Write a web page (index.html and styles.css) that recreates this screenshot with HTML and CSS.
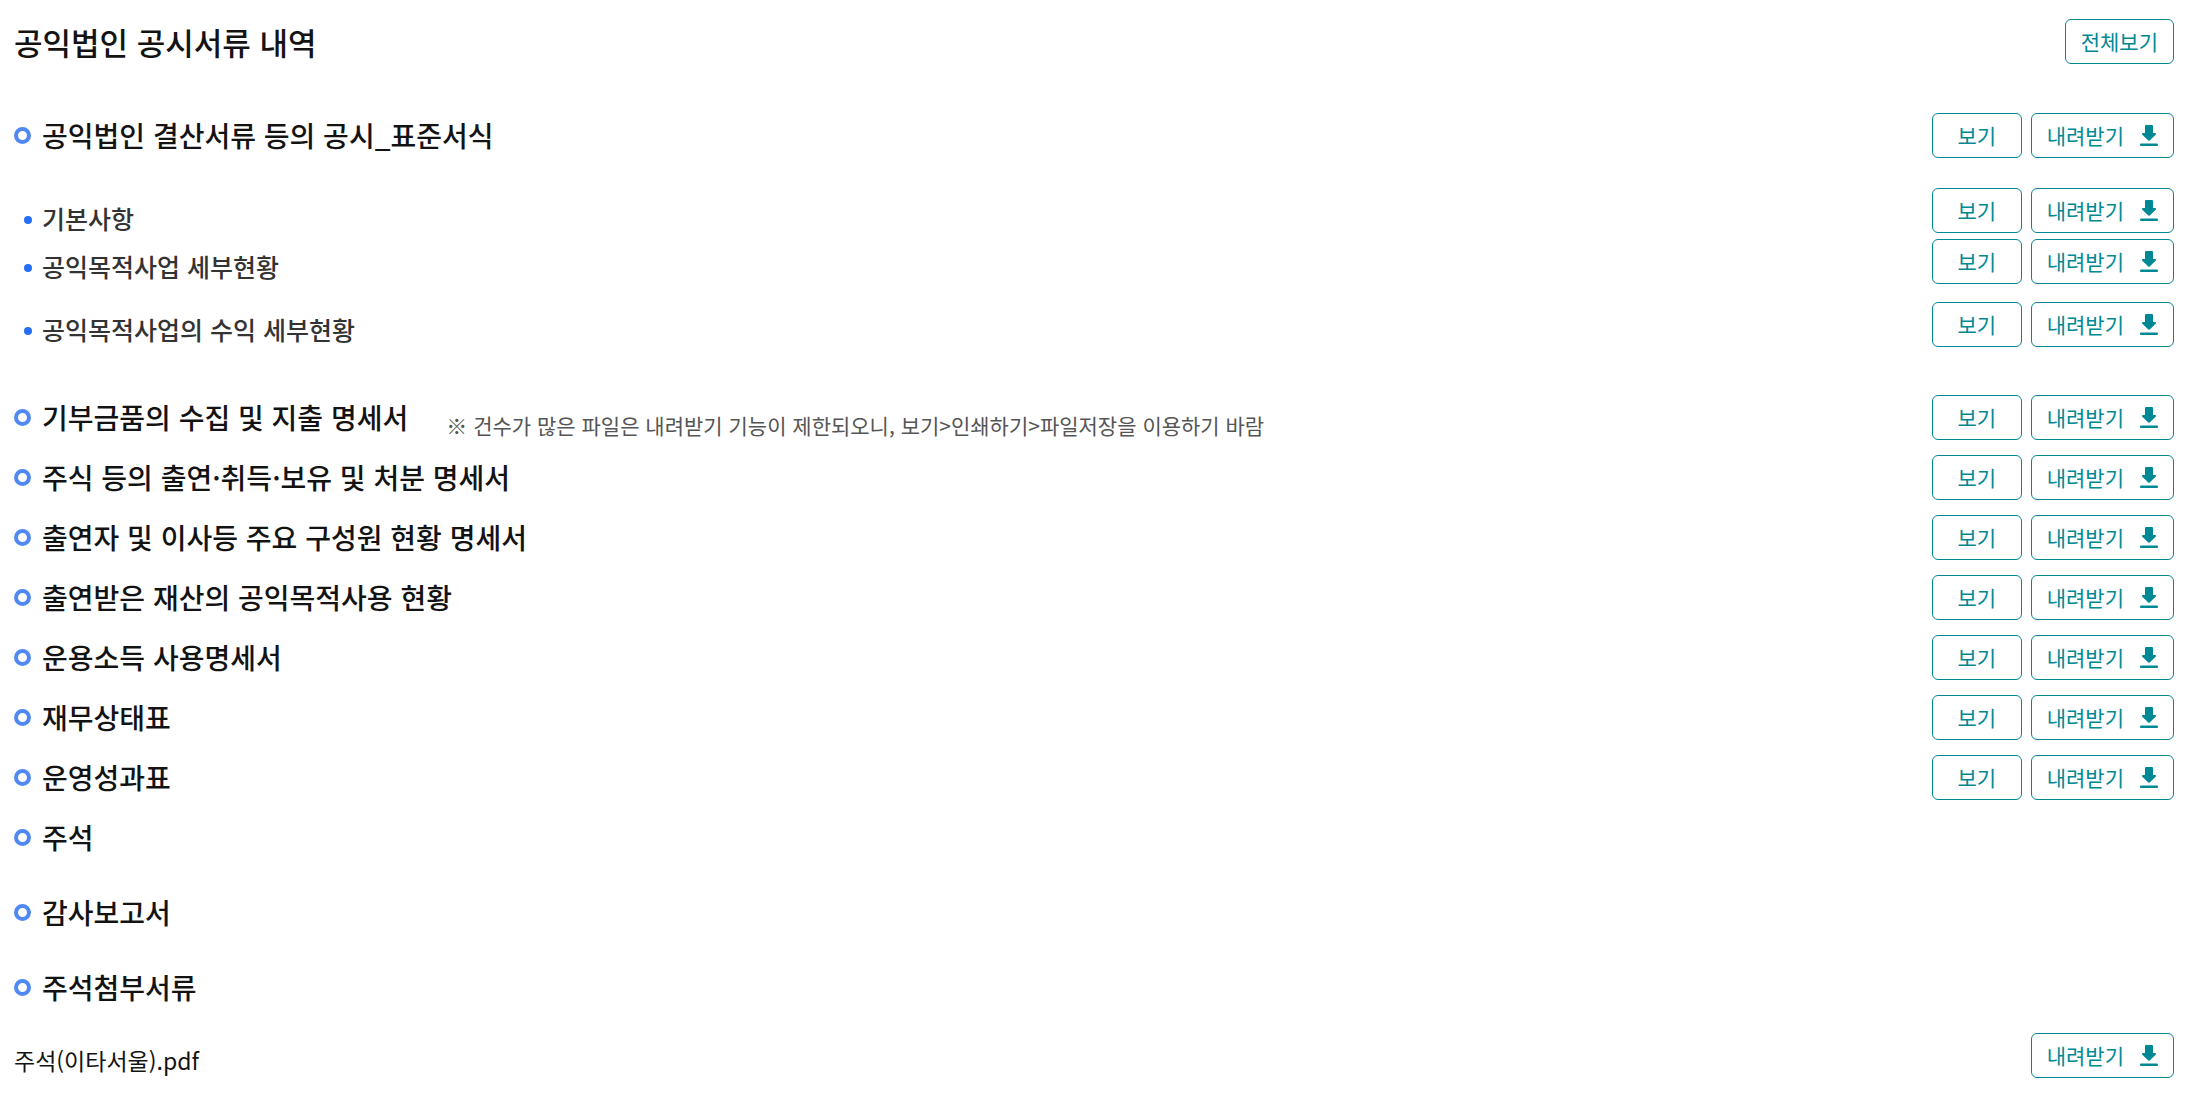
FILE: index.html
```html
<!DOCTYPE html>
<html lang="ko">
<head>
  <meta charset="UTF-8">
  <meta name="viewport" content="width=device-width, initial-scale=1.0">
  <title>공익법인 공시서류 내역</title>
  <link rel="stylesheet" href="styles.css">
</head>
<body>
  <svg class="sprite" aria-hidden="true">
    <symbol id="icon-down" viewBox="0 0 18 21">
      <path d="M6 1h6v8h3L9 14.800 3 9h3z" stroke="#008994" stroke-width="2" stroke-linejoin="round"/>
      <rect y="18.500" width="18" height="2.500" rx="1"/>
    </symbol>
  </svg>

  <main class="documents">
    <header class="row page-head">
      <h1>공익법인 공시서류 내역</h1>
      <button type="button" class="btn">전체보기</button>
    </header>

    <section class="group">
      <div class="row">
        <h2>공익법인 결산서류 등의 공시_표준서식</h2>
        <div class="btns">
          <button type="button" class="btn view">보기</button>
          <button type="button" class="btn">내려받기 <svg class="icon"><use href="#icon-down"/></svg></button>
        </div>
      </div>
      <ul class="sub-list">
        <li class="row first">
          <span class="sub-title">기본사항</span>
          <div class="btns">
            <button type="button" class="btn view">보기</button>
            <button type="button" class="btn">내려받기 <svg class="icon"><use href="#icon-down"/></svg></button>
          </div>
        </li>
        <li class="row">
          <span class="sub-title">공익목적사업 세부현황</span>
          <div class="btns">
            <button type="button" class="btn view">보기</button>
            <button type="button" class="btn">내려받기 <svg class="icon"><use href="#icon-down"/></svg></button>
          </div>
        </li>
        <li class="row last">
          <span class="sub-title">공익목적사업의 수익 세부현황</span>
          <div class="btns">
            <button type="button" class="btn view">보기</button>
            <button type="button" class="btn">내려받기 <svg class="icon"><use href="#icon-down"/></svg></button>
          </div>
        </li>
      </ul>
    </section>

    <section class="group list">
      <div class="row">
        <h2>기부금품의 수집 및 지출 명세서</h2>
        <p class="note">※ 건수가 많은 파일은 내려받기 기능이 제한되오니, 보기&gt;인쇄하기&gt;파일저장을 이용하기 바람</p>
        <div class="btns">
          <button type="button" class="btn view">보기</button>
          <button type="button" class="btn">내려받기 <svg class="icon"><use href="#icon-down"/></svg></button>
        </div>
      </div>
      <div class="row">
        <h2>주식 등의 출연·취득·보유 및 처분 명세서</h2>
        <div class="btns">
          <button type="button" class="btn view">보기</button>
          <button type="button" class="btn">내려받기 <svg class="icon"><use href="#icon-down"/></svg></button>
        </div>
      </div>
      <div class="row">
        <h2>출연자 및 이사등 주요 구성원 현황 명세서</h2>
        <div class="btns">
          <button type="button" class="btn view">보기</button>
          <button type="button" class="btn">내려받기 <svg class="icon"><use href="#icon-down"/></svg></button>
        </div>
      </div>
      <div class="row">
        <h2>출연받은 재산의 공익목적사용 현황</h2>
        <div class="btns">
          <button type="button" class="btn view">보기</button>
          <button type="button" class="btn">내려받기 <svg class="icon"><use href="#icon-down"/></svg></button>
        </div>
      </div>
      <div class="row">
        <h2>운용소득 사용명세서</h2>
        <div class="btns">
          <button type="button" class="btn view">보기</button>
          <button type="button" class="btn">내려받기 <svg class="icon"><use href="#icon-down"/></svg></button>
        </div>
      </div>
      <div class="row">
        <h2>재무상태표</h2>
        <div class="btns">
          <button type="button" class="btn view">보기</button>
          <button type="button" class="btn">내려받기 <svg class="icon"><use href="#icon-down"/></svg></button>
        </div>
      </div>
      <div class="row">
        <h2>운영성과표</h2>
        <div class="btns">
          <button type="button" class="btn view">보기</button>
          <button type="button" class="btn">내려받기 <svg class="icon"><use href="#icon-down"/></svg></button>
        </div>
      </div>
      <div class="row">
        <h2>주석</h2>
      </div>
    </section>

    <section class="group attachments">
      <div class="row">
        <h2>감사보고서</h2>
      </div>
      <div class="row">
        <h2>주석첨부서류</h2>
      </div>
    </section>

    <div class="row file">
      <span class="file-name">주석(이타서울).pdf</span>
      <div class="btns">
        <button type="button" class="btn">내려받기 <svg class="icon"><use href="#icon-down"/></svg></button>
      </div>
    </div>
  </main>
</body>
</html>
```
FILE: styles.css
```css
*, *::before {
  box-sizing: border-box;
}

body {
  margin: 0;
  background: #fff;
  color: #131313;
  font-family: "Noto Sans CJK KR", "Noto Sans", sans-serif;
}

h1, h2, p, ul {
  margin: 0;
  padding: 0;
}

.sprite {
  display: none;
}

.documents {
  padding: 19px 22px 30px 14px;
}

.row {
  display: flex;
  align-items: center;
  min-height: 45px;
}

.page-head {
  justify-content: space-between;
  margin-bottom: 49px;
}

h1 {
  font-size: 31px;
  font-weight: 500;
  line-height: 40px;
}

h2 {
  display: flex;
  align-items: center;
  gap: 11px;
  padding-bottom: 2px;
  font-size: 28px;
  font-weight: 500;
  line-height: 40px;
}

h2::before {
  content: "";
  width: 17px;
  height: 17px;
  margin-top: 2px;
  border: 4px solid #5089f2;
  border-radius: 50%;
}

.btns {
  display: flex;
  gap: 9px;
  margin-left: auto;
}

.btn {
  display: flex;
  align-items: center;
  justify-content: center;
  gap: 16px;
  height: 45px;
  padding: 0 15px 2px;
  border: 1px solid #008994;
  border-radius: 6px;
  background: #fff;
  color: #008994;
  font-family: inherit;
  font-size: 21px;
  white-space: nowrap;
  cursor: pointer;
}

.view {
  min-width: 90px;
}

.icon {
  width: 18px;
  height: 21px;
  margin-top: 2px;
  fill: #008994;
}

.sub-list {
  margin-top: 30px;
  list-style: none;
}

.sub-title {
  display: flex;
  align-items: center;
  gap: 10px;
  padding: 10px 0 0 10px;
  color: #333;
  font-size: 25px;
  font-weight: 500;
  line-height: 27px;
}

.sub-title::before {
  content: "";
  width: 8px;
  height: 8px;
  margin-top: 2px;
  border-radius: 50%;
  background: #256ef4;
}

.first {
  margin-bottom: 6px;
}

.first .sub-title {
  padding-top: 16px;
}

.last {
  margin-top: 18px;
}

.list {
  display: grid;
  gap: 15px;
  margin-top: 48px;
}

.note {
  padding: 14px 0 0 38px;
  color: #555;
  font-size: 21px;
  line-height: 28px;
}

.attachments {
  display: grid;
  gap: 30px;
  margin-top: 30px;
}

.file {
  margin-top: 23px;
}

.file-name {
  padding-top: 8px;
  font-size: 23px;
  line-height: 30px;
}
```
